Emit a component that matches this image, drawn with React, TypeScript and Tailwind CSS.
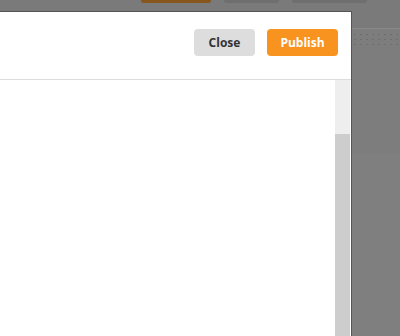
export default function App() {
  return (
    <div className="relative w-[400px] h-[336px] overflow-hidden bg-[#7f7f7f] font-['Open_Sans',sans-serif]">
      {/* page behind the overlay */}
      <div className="h-[29px] bg-[#7a7a7a] border-b border-[#8a8a8a] flex items-start">
        <div className="ml-[141px] w-[70px] h-[3px] rounded-b-[4px] bg-[#87561c]" />
        <div className="ml-[13px] w-[55px] h-[3px] rounded-b-[4px] bg-[#6f6f6f]" />
        <div className="ml-[13px] w-[75px] h-[3px] rounded-b-[4px] bg-[#6f6f6f]" />
      </div>
      <div className="h-[125px] bg-[#7d7d7d] pt-[3px]">
        <div className="h-[15px] ml-[352px] bg-[radial-gradient(#6e6e6e_1px,transparent_1px)] bg-[length:6px_5px]" />
      </div>
      <div className="h-[181px] bg-[#7f7f7f]" />

      {/* modal */}
      <div className="absolute left-[-200px] top-[11px] w-[552px] bottom-0 bg-white border-t border-r border-[#555] flex flex-col">
        <div className="h-[68px] shrink-0 border-b border-[#ddd] flex justify-end items-start gap-3 pt-[17px] pr-[13px]">
          <button className="w-[61px] h-[27px] rounded-[4px] bg-[#dddddd] text-[#333] text-[12px] font-bold">
            Close
          </button>
          <button className="w-[71px] h-[27px] rounded-[4px] bg-[#f7931e] text-white text-[12px] font-bold">
            Publish
          </button>
        </div>
        <div className="flex-1 flex pr-px">
          <div className="flex-1" />
          <div className="w-[15px] flex flex-col">
            <div className="h-[54px] bg-[#eeeeee]" />
            <div className="flex-1 bg-[#cdcdcd]" />
          </div>
        </div>
      </div>
    </div>
  );
}
